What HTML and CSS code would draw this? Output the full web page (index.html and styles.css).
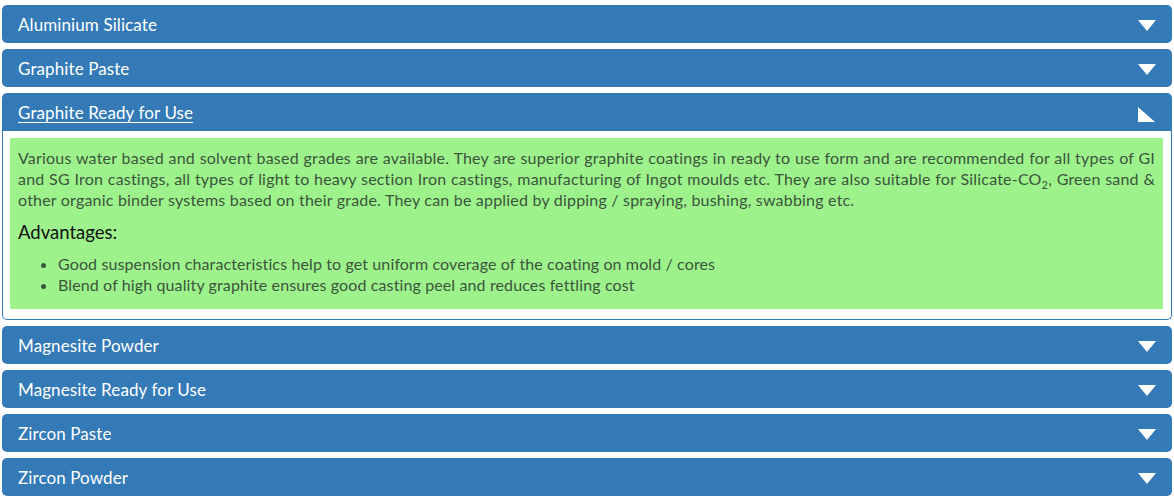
FILE: index.html
```html
<!DOCTYPE html>
<html>
<head>
<meta charset="utf-8">
<link rel="stylesheet" href="styles.css">
</head>
<body>
<div class="accordion">
  <div class="item">
    <div class="head"><span class="title">Aluminium Silicate</span><span class="arrow down"></span></div>
  </div>
  <div class="item">
    <div class="head"><span class="title">Graphite Paste</span><span class="arrow down"></span></div>
  </div>
  <div class="item open">
    <div class="head"><a class="title link">Graphite Ready for Use</a><span class="arrow corner"></span></div>
    <div class="panel">
      <div class="box">
        <p class="desc">Various water based and solvent based grades are available. They are superior graphite coatings in ready to use form and are recommended for all types of GI and SG Iron castings, all types of light to heavy section Iron castings, manufacturing of Ingot moulds etc. They are also suitable for Silicate-CO<sub>2</sub>, Green sand &amp; other organic binder systems based on their grade. They can be applied by dipping / spraying, bushing, swabbing etc.</p>
        <h4 class="adv">Advantages:</h4>
        <ul class="list">
          <li>Good suspension characteristics help to get uniform coverage of the coating on mold / cores</li>
          <li>Blend of high quality graphite ensures good casting peel and reduces fettling cost</li>
        </ul>
      </div>
    </div>
  </div>
  <div class="item">
    <div class="head"><span class="title">Magnesite Powder</span><span class="arrow down"></span></div>
  </div>
  <div class="item">
    <div class="head"><span class="title">Magnesite Ready for Use</span><span class="arrow down"></span></div>
  </div>
  <div class="item">
    <div class="head"><span class="title">Zircon Paste</span><span class="arrow down"></span></div>
  </div>
  <div class="item">
    <div class="head"><span class="title">Zircon Powder</span><span class="arrow down"></span></div>
  </div>
</div>
</body>
</html>
```
FILE: styles.css
```css
html, body {
  margin: 0;
  padding: 0;
  background: #ffffff;
}
body {
  font-family: "Lato", "Open Sans", sans-serif;
}
.accordion {
  padding: 5px 2px 0 2px;
  display: flex;
  flex-direction: column;
  gap: 6px;
}
.head {
  height: 38px;
  background: #337ab7;
  border-radius: 5px;
  display: flex;
  align-items: center;
  justify-content: space-between;
  padding: 0 16px;
  color: #ffffff;
  font-size: 17px;
  letter-spacing: 0.1px;
}
.open .head {
  border-radius: 5px 5px 0 0;
}
.title {
  color: #ffffff;
}
.link {
  text-decoration: underline;
  text-underline-offset: 3px;
}
.arrow {
  display: block;
  width: 0;
  height: 0;
}
.arrow.down {
  border-left: 9px solid transparent;
  border-right: 9px solid transparent;
  border-top: 11px solid #ffffff;
  margin-top: 2px;
}
.arrow.corner {
  border-right: 17px solid transparent;
  border-bottom: 15px solid #ffffff;
  margin-top: 4px;
  margin-right: 1px;
}
.panel {
  border: 1px solid #337ab7;
  border-top: none;
  border-radius: 0 0 5px 5px;
  padding: 7px 8px 10px 7px;
}
.box {
  background: #9df28c;
  padding: 9px 8px 14px 8px;
  color: #3b553b;
  font-size: 16px;
  line-height: 21px;
}
.desc {
  margin: 0;
  text-align: justify;
  letter-spacing: 0.2px;
}
.desc sub {
  font-size: 11px;
  line-height: 0;
}
.adv {
  margin: 11px 0 10px 0;
  font-size: 18.5px;
  font-weight: normal;
  line-height: 22px;
  color: #111;
}
.list {
  margin: 0;
  padding-left: 40px;
  letter-spacing: 0.12px;
}
```
